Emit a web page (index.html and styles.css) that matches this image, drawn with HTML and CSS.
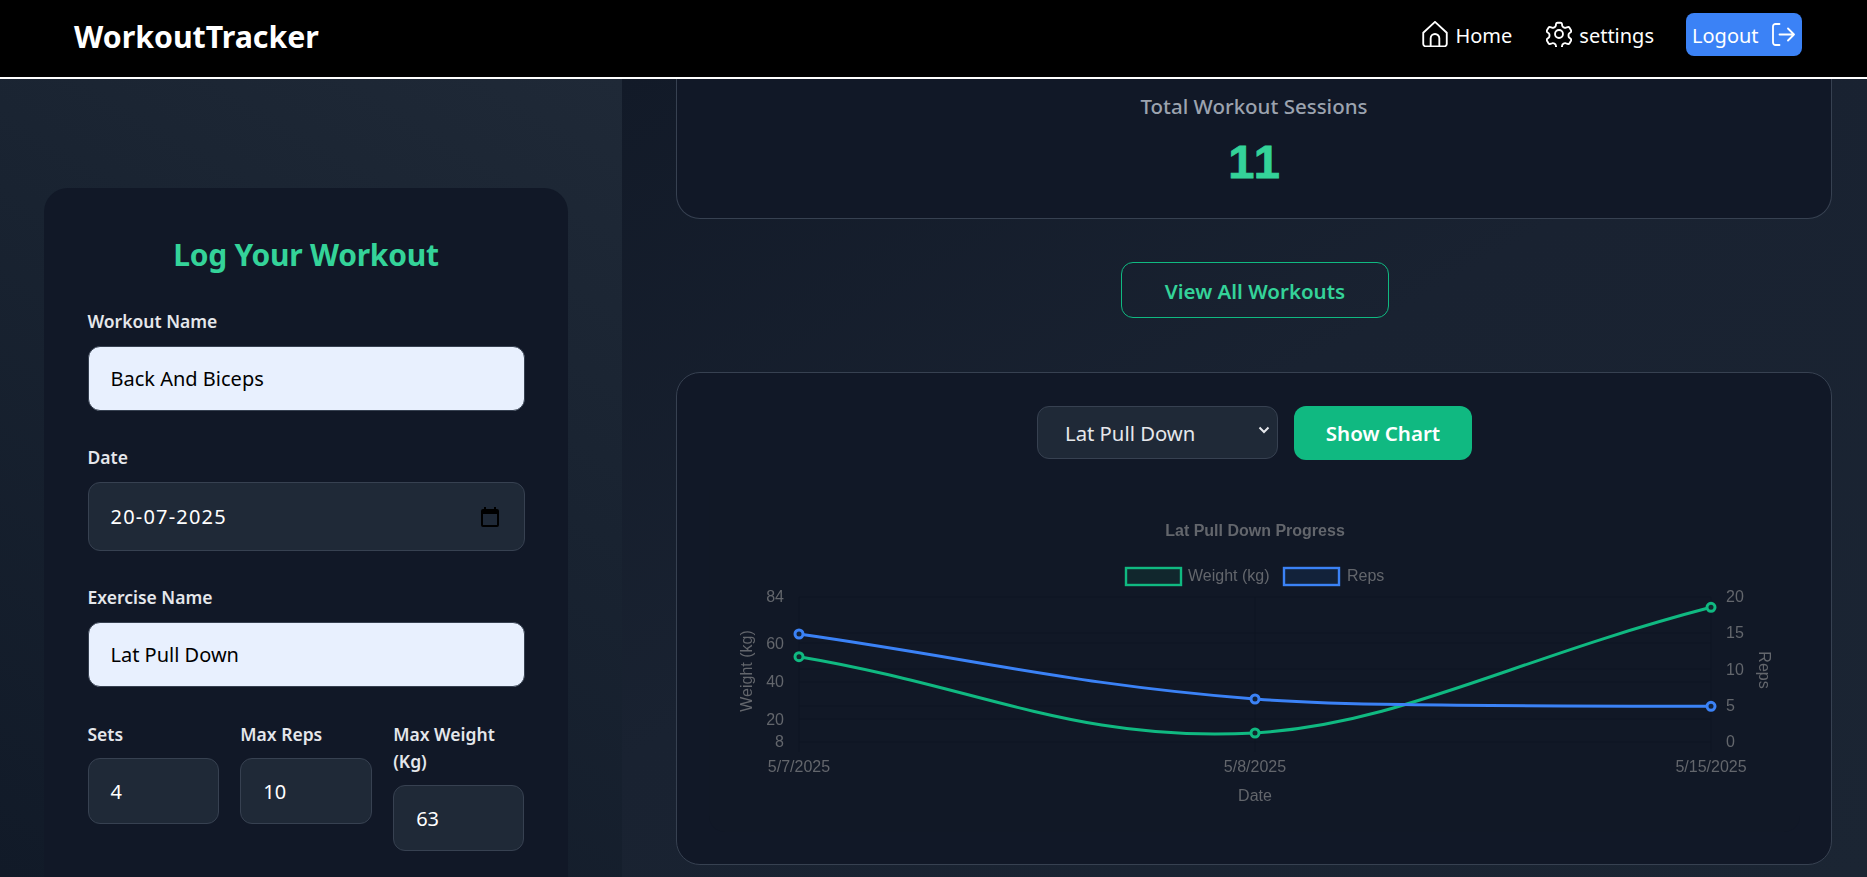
FILE: index.html
```html
<!DOCTYPE html>
<html lang="en">
<head>
    <title>WorkoutTracker</title>
    <meta name="viewport" content="width=device-width, initial-scale=1">
    <link rel="stylesheet" href="styles.css">
</head>
<body>
    <nav class="navbar">
        <div class="brand">WorkoutTracker</div>
        <div class="nav-links">
            <a class="nav-link">
                <svg class="nav-icon" viewBox="1.500 1.500 21 21"><path d="M2.500 11 12 2.200 21.500 11v8.800a2.200 2.200 0 0 1-2.200 2.200H4.700a2.200 2.200 0 0 1-2.200-2.200z"/><path d="M8.500 22v-6.500a3.500 3.500 0 0 1 7 0V22"/></svg>
                Home
            </a>
            <a class="nav-link">
                <svg class="nav-icon" viewBox="1.500 1.500 21 21"><path d="M9.600 3.900c.1-.6.600-1 1.200-1h2.400c.6 0 1.100.4 1.200 1l.2 1.500c.1.400.4.800.8 1l.9.5c.4.200.9.200 1.300 0l1.400-.5c.6-.2 1.200 0 1.500.5l1.200 2.100c.3.500.2 1.200-.3 1.600l-1.200.9c-.3.300-.5.700-.5 1.200v1c0 .5.200.9.500 1.200l1.200.9c.5.400.6 1 .3 1.600l-1.200 2.100c-.3.500-.9.700-1.500.5l-1.400-.5c-.4-.2-.9-.2-1.300 0l-.9.500c-.4.200-.7.600-.8 1l-.2 1.500c-.1.600-.6 1-1.200 1h-2.400c-.6 0-1.100-.4-1.200-1l-.2-1.500c-.1-.4-.4-.8-.8-1l-.9-.5c-.4-.2-.9-.2-1.300 0l-1.400.5c-.6.200-1.200 0-1.500-.5l-1.200-2.100c-.3-.5-.2-1.200.3-1.600l1.200-.9c.3-.3.500-.7.500-1.200v-1c0-.5-.2-.9-.5-1.200l-1.200-.9c-.5-.4-.6-1-.3-1.600l1.200-2.100c.3-.5.9-.7 1.500-.5l1.400.5c.4.200.9.200 1.300 0l.9-.5c.4-.2.7-.6.8-1z"/><circle cx="12" cy="12" r="3.200"/></svg>
                settings
            </a>
            <a class="logout-btn">
                Logout
                <svg class="logout-icon" viewBox="0 0 23 23"><path d="M7.500 1H3.500A2.500 2.500 0 0 0 1 3.500v16A2.500 2.500 0 0 0 3.500 22h4"/><path d="M7.500 11.500H22M16 5.500l6 6-6 6"/></svg>
            </a>
        </div>
    </nav>

    <div class="layout">
        <aside class="sidebar">
            <form class="log-card">
                <h2 class="log-title">Log Your Workout</h2>

                <div class="field">
                    <label class="field-label">Workout Name</label>
                    <div class="input input-filled">Back And Biceps</div>
                </div>

                <div class="field">
                    <label class="field-label">Date</label>
                    <div class="input input-date">
                        <span class="date-value">20-07-2025</span>
                        <svg class="date-icon" viewBox="0 0 24 24"><path d="M19 4h-1V2h-2v2H8V2H6v2H5a2 2 0 0 0-2 2v14a2 2 0 0 0 2 2h14a2 2 0 0 0 2-2V6a2 2 0 0 0-2-2zm0 16H5V9h14z"/></svg>
                    </div>
                </div>

                <div class="field">
                    <label class="field-label">Exercise Name</label>
                    <div class="input input-filled">Lat Pull Down</div>
                </div>

                <div class="field-row">
                    <div>
                        <label class="field-label">Sets</label>
                        <div class="input input-small">4</div>
                    </div>
                    <div>
                        <label class="field-label">Max Reps</label>
                        <div class="input input-small">10</div>
                    </div>
                    <div>
                        <label class="field-label">Max Weight (Kg)</label>
                        <div class="input input-small">63</div>
                    </div>
                </div>
            </form>
        </aside>

        <main class="content">
            <section class="stat-card">
                <div class="stat-label">Total Workout Sessions</div>
                <div class="stat-value">11</div>
            </section>

            <a class="view-all">View All Workouts</a>

            <section class="chart-card">
                <div class="chart-controls">
                    <div class="exercise-select">
                        Lat Pull Down
                        <svg class="select-arrow" viewBox="0 0 12 12"><path d="M1.500 3.500 6 8l4.500-4.500"/></svg>
                    </div>
                    <button class="show-chart" type="button">Show Chart</button>
                </div>

                <div class="chart-box">
                    <svg class="chart" viewBox="709 490 1091 342">
                        <g class="grid">
                            <path d="M799 597H1711M799 633H1711M799 643H1711M799 669H1711M799 682H1711M799 706H1711M799 719H1711M799 742H1711"/>
                            <path d="M799 597V752M1255 597V752M1711 597V752"/>
                        </g>

                        <text class="chart-title" x="1255" y="536">Lat Pull Down Progress</text>

                        <rect class="legend-green" x="1126" y="568" width="55" height="17"/>
                        <text class="chart-text" x="1188" y="581">Weight (kg)</text>
                        <rect class="legend-blue" x="1284" y="568" width="55" height="17"/>
                        <text class="chart-text" x="1347" y="581">Reps</text>

                        <g class="chart-text tick-left">
                            <text x="784" y="602">84</text>
                            <text x="784" y="649">60</text>
                            <text x="784" y="687">40</text>
                            <text x="784" y="725">20</text>
                            <text x="784" y="747">8</text>
                        </g>
                        <g class="chart-text">
                            <text x="1726" y="602">20</text>
                            <text x="1726" y="638">15</text>
                            <text x="1726" y="675">10</text>
                            <text x="1726" y="711">5</text>
                            <text x="1726" y="747">0</text>
                        </g>
                        <g class="chart-text tick-bottom">
                            <text x="799" y="772">5/7/2025</text>
                            <text x="1255" y="772">5/8/2025</text>
                            <text x="1711" y="772">5/15/2025</text>
                            <text x="1255" y="801">Date</text>
                        </g>
                        <text class="chart-text tick-bottom" transform="translate(752 671) rotate(-90)">Weight (kg)</text>
                        <text class="chart-text tick-bottom" transform="translate(1759 670) rotate(90)">Reps</text>

                        <path class="line-green" d="M799 656.700C981.400 687.200 1074.800 742.800 1255 733C1400 724 1510 660 1711 607.300"/>
                        <path class="line-blue" d="M799 634C981.400 660 1071.700 684.500 1255 699C1330 704.500 1420 706 1711 706.300"/>

                        <circle class="point-green" cx="799" cy="656.700" r="4"/>
                        <circle class="point-green" cx="1255" cy="733" r="4"/>
                        <circle class="point-green" cx="1711" cy="607.300" r="4"/>
                        <circle class="point-blue" cx="799" cy="634" r="4"/>
                        <circle class="point-blue" cx="1255" cy="699" r="4"/>
                        <circle class="point-blue" cx="1711" cy="706.300" r="4"/>
                    </svg>
                </div>
            </section>
        </main>
    </div>
</body>
</html>
```

FILE: styles.css
```css
* {
    box-sizing: border-box;
}
html, body {
    margin: 0;
    height: 100%;
    overflow: hidden;
}
body {
    font-family: "Noto Sans", "Open Sans", sans-serif;
    background: #111827;
    color: #fff;
}

/* navbar */
.navbar {
    height: 79px;
    background: #000;
    border-bottom: 2px solid #fff;
    display: flex;
    align-items: center;
    justify-content: space-between;
    padding: 0 65px 8px 74px;
}
.brand {
    font-size: 30.300px;
    font-weight: 700;
    padding-top: 4px;
}
.nav-links {
    display: flex;
    align-items: center;
}
.nav-link {
    display: flex;
    align-items: center;
    gap: 7px;
    font-size: 20px;
    padding-top: 2px;
    margin-right: 34px;
}
.nav-link + .nav-link {
    margin-right: 32px;
}
.nav-icon {
    width: 26px;
    height: 26px;
    margin-top: -4px;
    fill: none;
    stroke: #fff;
    stroke-width: 1.500;
    stroke-linejoin: round;
    stroke-linecap: round;
}
.logout-btn {
    display: flex;
    align-items: center;
    justify-content: space-between;
    width: 116px;
    height: 43px;
    padding: 2px 7px 0 6px;
    background: #3b82f6;
    border-radius: 8px;
    font-size: 20px;
}
.logout-icon {
    width: 23px;
    height: 23px;
    margin-top: -3px;
    fill: none;
    stroke: #fff;
    stroke-width: 1.800;
    stroke-linecap: round;
    stroke-linejoin: round;
}

/* page columns */
.layout {
    display: flex;
    height: calc(100% - 79px);
}
.sidebar {
    width: 622px;
    padding: 109px 54px 0 44px;
    background: linear-gradient(30deg, #111a28 0%, #192331 60%, #1f2937 100%);
    overflow: hidden;
}
.content {
    flex: 1;
    padding: 0 35px 0 54px;
    background: linear-gradient(150deg, #121a28 0%, #192231 45%, #1b2533 100%);
    display: flex;
    flex-direction: column;
    align-items: center;
    overflow: hidden;
}

/* log form */
.log-card {
    background: #111827;
    border-radius: 24px 24px 0 0;
    padding: 46px 43.500px 0;
    height: 700px;
}
.log-title {
    margin: 0 0 33px;
    font-size: 30px;
    line-height: 42px;
    font-weight: 700;
    letter-spacing: -0.25px;
    color: #34d399;
    text-align: center;
}
.field {
    margin-bottom: 34px;
}
.field-label {
    display: block;
    font-size: 17.500px;
    line-height: 27px;
    font-weight: 600;
    color: #e5e7eb;
    margin-top: -1px;
    margin-bottom: 11px;
}
.input {
    display: flex;
    align-items: center;
    height: 69px;
    padding: 0 22px;
    font-size: 20px;
    background: #1f2937;
    border: 1px solid #374151;
    border-radius: 12px;
    color: #fff;
}
.input-filled {
    height: 65px;
    background: #e8f0fe;
    color: #000;
}
.input-date {
    justify-content: space-between;
}
.date-value {
    letter-spacing: 1.200px;
}
.date-icon {
    width: 24px;
    height: 24px;
    fill: #000;
}
.input-small {
    height: 66px;
}
.field-row {
    display: grid;
    grid-template-columns: repeat(3, 1fr);
    column-gap: 21.500px;
    margin-top: 35px;
}
.field-row .field-label {
    margin-bottom: 10px;
}

/* stats */
.stat-card {
    width: 100%;
    height: 140px;
    flex-shrink: 0;
    background: #111827;
    border: 1px solid #374151;
    border-top: none;
    border-radius: 0 0 24px 24px;
    text-align: center;
    padding-top: 12px;
}
.stat-label {
    font-size: 20.500px;
    line-height: 30px;
    font-weight: 500;
    color: #9ca3af;
}
.stat-value {
    font-family: "Liberation Sans", sans-serif;
    font-size: 47px;
    line-height: 58px;
    font-weight: 700;
    letter-spacing: 2px;
    padding-left: 2px;
    color: #34d399;
    margin-top: 12px;
    -webkit-text-stroke: 0.800px #34d399;
}
.view-all {
    display: flex;
    align-items: center;
    justify-content: center;
    width: 268px;
    height: 56px;
    flex-shrink: 0;
    margin: 43px 0 54px 2px;
    padding-top: 1px;
    border: 1px solid #10b981;
    border-radius: 12px;
    font-size: 20.500px;
    font-weight: 600;
    color: #34d399;
}

/* chart */
.chart-card {
    width: 100%;
    height: 493px;
    flex-shrink: 0;
    background: #111827;
    border: 1px solid #374151;
    border-radius: 24px;
    padding: 33px 31px 33px 32px;
}
.chart-controls {
    display: flex;
    justify-content: center;
    gap: 16px;
}
.exercise-select {
    display: flex;
    align-items: center;
    justify-content: space-between;
    width: 241px;
    height: 53px;
    padding: 0 7px 0 27px;
    font-size: 20.300px;
    color: #e5e7eb;
    background: #1f2937;
    border: 1px solid #374151;
    border-radius: 12px;
}
.select-arrow {
    width: 12px;
    height: 12px;
    margin-top: -5px;
    fill: none;
    stroke: #e5e7eb;
    stroke-width: 2;
}
.show-chart {
    width: 178px;
    height: 54px;
    font: 600 20.500px "Noto Sans", sans-serif;
    color: #fff;
    background: #10b981;
    border: none;
    border-radius: 12px;
}
.chart-box {
    height: 342px;
    margin-top: 30px;
    background: #111826;
    border-radius: 0 0 16px 16px;
}
.chart {
    display: block;
    width: 100%;
    height: 100%;
    filter: blur(0.350px);
}
.chart text {
    font-family: "Liberation Sans", Arial, sans-serif;
    font-size: 16px;
    fill: #63666c;
}
.chart .chart-title {
    font-weight: 700;
    text-anchor: middle;
}
.tick-left text {
    text-anchor: end;
}
.tick-bottom,
.tick-bottom text {
    text-anchor: middle;
}
.grid path {
    fill: none;
    stroke: #0e1522;
    stroke-width: 1;
}
.legend-green {
    fill: #11272d;
    stroke: #10b981;
    stroke-width: 2.400;
}
.legend-blue {
    fill: #12223a;
    stroke: #3b82f6;
    stroke-width: 2.400;
}
.line-green,
.line-blue {
    fill: none;
    stroke-width: 3;
}
.line-green {
    stroke: #10b981;
}
.line-blue {
    stroke: #3b82f6;
}
.point-green {
    fill: #11272d;
    stroke: #10b981;
    stroke-width: 3;
}
.point-blue {
    fill: #12223a;
    stroke: #3b82f6;
    stroke-width: 3;
}
```
